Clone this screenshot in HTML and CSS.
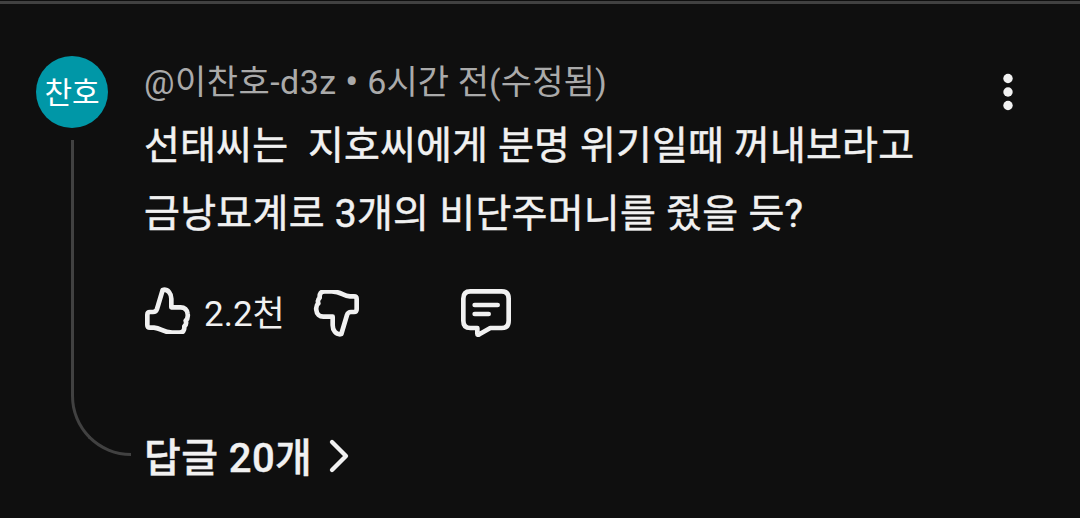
FILE: index.html
```html
<!DOCTYPE html>
<html lang="ko">
<head>
    <meta charset="UTF-8">
    <meta name="viewport" content="width=device-width, initial-scale=1.0">
    <title>댓글</title>
    <link rel="stylesheet" href="styles.css">
</head>
<body>
    <div class="comment">
        <div class="side">
            <div class="avatar">찬호</div>
            <div class="thread-line"></div>
        </div>

        <div class="content">
            <div class="meta"><span class="name">@이찬호-d3z</span> <span class="dot">•</span> 6시간 전(수정됨)</div>
            <div class="text"><p class="line-one">선태씨는&nbsp; 지호씨에게 분명 위기일때 꺼내보라고</p><p class="line-two">금낭묘계로 3개의 비단주머니를 줬을 듯?</p></div>

            <div class="actions">
                <svg class="icon thumb" viewBox="0 0 144 144">
                    <path d="M18 78Q10 78 10 86V117Q10 125 18 125H30C52 127 55 138 84 140H106C117 140 122 133 121 121Q129 114 125 104Q133 97 131 84C130 71 121 64 110 64H82V38C82 22 72 11 60 11L56 12L39 69Q36 78 27 78Z"/>
                </svg>
                <span class="likes">2.2천</span>
                <svg class="icon thumb down" viewBox="0 0 144 144">
                    <path d="M18 78Q10 78 10 86V117Q10 125 18 125H30C52 127 55 138 84 140H106C117 140 122 133 121 121Q129 114 125 104Q133 97 131 84C130 71 121 64 110 64H82V38C82 22 72 11 60 11L56 12L39 69Q36 78 27 78Z"/>
                </svg>
                <svg class="icon reply" viewBox="0 0 156 156">
                    <path d="M31 10H125Q146 10 146 32V98Q146 120 125 120H91L58 139Q52 142 52 137V120H31Q10 120 10 98V32Q10 10 31 10Z"/>
                    <path d="M44 51H113M44 78H86"/>
                </svg>
            </div>

            <div class="replies">
                <span class="replies-label">답글 20개</span>
                <svg class="chevron" viewBox="0 0 24 36">
                    <path d="M4 4L18 18L4 32"/>
                </svg>
            </div>
        </div>

        <svg class="menu" viewBox="0 0 12 40">
            <circle cx="6" cy="6.5" r="4.7"/>
            <circle cx="6" cy="20" r="4.7"/>
            <circle cx="6" cy="33.5" r="4.7"/>
        </svg>
    </div>
</body>
</html>
```
FILE: styles.css
```css
* {
    box-sizing: border-box;
}
body {
    margin: 0;
    height: 518px;
    padding-top: 1px;
    overflow: hidden;
    background-color: #0f0f0f;
    color: #f1f1f1;
    font-family: Roboto, "Noto Sans CJK KR", sans-serif;
}
.comment {
    display: flex;
    height: 517px;
    padding: 52px 66px 0 36px;
    border-top: 3px solid #414141;
}
.side {
    width: 108px;
}
.avatar {
    display: flex;
    align-items: center;
    justify-content: center;
    width: 72px;
    height: 72px;
    padding-bottom: 4px;
    border-radius: 50%;
    background-color: #0097a7;
    color: #fff;
    font-size: 30px;
}
.thread-line {
    width: 60px;
    height: 316px;
    margin: 12px 0 0 35px;
    border-left: 3px solid #414141;
    border-bottom: 3px solid #414141;
    border-bottom-left-radius: 60px;
}
.content {
    flex: 1;
}
.meta {
    height: 56px;
    line-height: 53px;
    font-size: 34px;
    letter-spacing: 0.1px;
    color: #aaa;
    white-space: nowrap;
}
.name {
    letter-spacing: 0.45px;
}
.dot {
    font-size: 40px;
    line-height: 1;
    vertical-align: -2px;
}
.text {
    font-size: 39px;
    line-height: 68px;
    white-space: nowrap;
    -webkit-text-stroke: 0.5px #f1f1f1;
}
.text p {
    height: 68px;
    margin: 0;
}
.line-one {
    letter-spacing: 0.17px;
}
.line-two {
    letter-spacing: 0.28px;
}
.actions {
    display: flex;
    align-items: flex-start;
    height: 54px;
    margin-top: 38px;
}
.icon {
    fill: none;
    stroke: #f1f1f1;
    stroke-width: 14;
    stroke-linecap: round;
    stroke-linejoin: round;
}
.thumb {
    width: 48px;
    height: 48px;
}
.likes {
    width: 108px;
    margin-left: 12px;
    font-size: 35px;
    line-height: 58px;
}
.down {
    margin-top: 4px;
    transform: rotate(180deg);
}
.reply {
    width: 52px;
    height: 52px;
    margin: 2px 0 0 100px;
}
.replies {
    display: flex;
    align-items: center;
    height: 60px;
    margin-top: 86px;
    font-size: 40px;
    font-weight: 500;
}
.replies-label {
    width: 184px;
    padding-bottom: 3px;
    letter-spacing: 0.4px;
    white-space: nowrap;
    -webkit-text-stroke: 0.4px #f1f1f1;
}
.chevron {
    width: 24px;
    height: 36px;
    fill: none;
    stroke: #f1f1f1;
    stroke-width: 4.3;
    stroke-linecap: round;
    stroke-linejoin: round;
}
.menu {
    width: 12px;
    height: 40px;
    margin-top: 16px;
    fill: #f1f1f1;
}
```
